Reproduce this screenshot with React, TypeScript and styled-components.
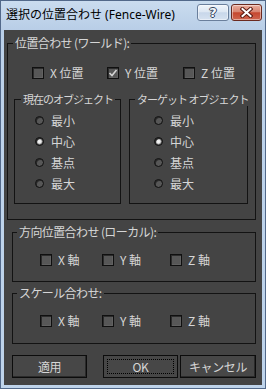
import React from "react";
import styled, { createGlobalStyle } from "styled-components";

const GlobalStyle = createGlobalStyle`
  html, body { margin: 0; padding: 0; background: #bcd2ea; }
  body { width: 266px; height: 389px; overflow: hidden; }
  * { box-sizing: border-box; }
`;

const Window = styled.div`
  width: 266px;
  height: 389px;
  display: flex;
  flex-direction: column;
  background: linear-gradient(#cadcef, #b9cee7 28px, #bdd2ea 60px, #bfd4eb);
  border: 1px solid #52698a;
  padding: 0 3px 3px 3px;
`;

const TitleBar = styled.div`
  height: 29px;
  flex: none;
  display: flex;
  align-items: flex-start;
`;

const Title = styled.div`
  flex: 1;
  padding: 6px 0 0 2px;
  font: 12px/16px "Noto Sans", "Noto Sans CJK JP", sans-serif;
  color: #000;
  white-space: nowrap;
`;

const CapButton = styled.div<{ $close?: boolean }>`
  width: ${(p) => (p.$close ? 31 : 32)}px;
  height: 17px;
  margin-top: 3px;
  margin-left: ${(p) => (p.$close ? 2 : 0)}px;
  border: 1px solid ${(p) => (p.$close ? "#6b2a20" : "#6a7f9c")};
  border-radius: 3px;
  background: ${(p) =>
    p.$close
      ? "linear-gradient(#eaae9f, #d88571 45%, #c5472f 52%, #cf6650)"
      : "linear-gradient(#f0f5fb, #dde7f3 45%, #c8d7ea 52%, #d6e2f0)"};
  box-shadow: inset 0 0 0 1px rgba(255, 255, 255, 0.45);
  display: flex;
  align-items: center;
  justify-content: center;
`;

const HelpGlyph = styled.span`
  font: bold 13px/13px "DejaVu Sans", sans-serif;
  color: #f6f8fc;
  text-shadow: 1px 0 0 #33445c, -1px 0 0 #33445c, 0 1px 0 #33445c, 0 -1px 0 #33445c;
`;

const Client = styled.div`
  flex: 1;
  background: #444444;
  display: flex;
  flex-direction: column;
  font-family: "Noto Sans CJK JP", "Noto Sans", sans-serif;
  font-size: 12px;
  line-height: 14px;
  color: #d6d6d6;
`;

const Group = styled.fieldset<{ $mt: number; $ml: number; $pb: number }>`
  margin: ${(p) => p.$mt}px 6px 0 ${(p) => p.$ml}px;
  padding: 0 0 ${(p) => p.$pb}px 0;
  border: 1px solid #131313;
  min-width: 0;
`;

const InnerGroup = styled.fieldset<{ $w: number }>`
  margin: 0;
  width: ${(p) => p.$w}px;
  min-width: 0;
  padding: 4px 0 9px 0;
  border: 1px solid #131313;
`;

const RadioList = styled.div<{ $pl: number }>`
  padding-left: ${(p) => p.$pl}px;
  display: flex;
  flex-direction: column;
`;

const Legend = styled.legend<{ $off: number; $small?: boolean }>`
  margin-left: ${(p) => p.$off}px;
  padding: 0 2px;
  font-size: ${(p) => (p.$small ? 11 : 12)}px;
  line-height: 14px;
  letter-spacing: ${(p) => (p.$small ? -1 : -0.6)}px;
  color: #d6d6d6;
  white-space: nowrap;
`;

const CheckRow = styled.div<{ $mt: number; $pl: number; $cols: string }>`
  margin-top: ${(p) => p.$mt}px;
  padding-left: ${(p) => p.$pl}px;
  height: 14px;
  display: grid;
  grid-template-columns: ${(p) => p.$cols};
  align-items: center;
`;

const CheckItem = styled.label`
  display: flex;
  align-items: center;
  gap: 6px;
  white-space: nowrap;
`;

const Box = styled.span`
  width: 12px;
  height: 12px;
  flex: none;
  background: #575757;
  border: 1px solid #101010;
  box-shadow: inset 1px 1px 0 #2c2c2c, inset -1px -1px 0 #616161;
  display: flex;
  align-items: center;
  justify-content: center;
`;

const InnerRow = styled.div`
  margin: 12px 7px 0 6px;
  display: flex;
  gap: 8px;
`;

const RadioItem = styled.label`
  height: 21px;
  display: flex;
  align-items: center;
  gap: 7px;
  white-space: nowrap;
`;

const Radio = styled.span<{ $on?: boolean }>`
  width: 9px;
  height: 9px;
  flex: none;
  border-radius: 50%;
  border: 1px solid #0e0e0e;
  background: ${(p) =>
    p.$on
      ? "radial-gradient(circle at 50% 50%, #f4f4f4 0, #e8e8e8 1.8px, #8a8a8a 2.6px, #585858 3.2px)"
      : "#575757"};
  box-shadow: inset 1px 1px 0 #2a2a2a;
`;

const ButtonRow = styled.div`
  margin-top: 11px;
  padding-left: 8px;
  display: flex;
`;

const Button = styled.button<{ $w: number; $ml: number; $def?: boolean }>`
  position: relative;
  width: ${(p) => p.$w}px;
  height: 23px;
  margin-left: ${(p) => p.$ml}px;
  padding: 0;
  background: #474747;
  border: 1px solid #0c0c0c;
  box-shadow: ${(p) => (p.$def ? "none" : "inset -1px -1px 0 #2a2a2a")};
  outline: none;
  font-family: "Noto Sans CJK JP", "Noto Sans", sans-serif;
  font-size: 12px;
  line-height: 14px;
  letter-spacing: -0.4px;
  color: #d6d6d6;
  &::after {
    content: "";
    display: ${(p) => (p.$def ? "block" : "none")};
    position: absolute;
    inset: 3px;
    border: 1px dotted #000;
  }
`;

const Check = () => (
  <svg width="10" height="10" viewBox="0 0 10 10">
    <path d="M1.5 5 L4 7.5 L8.5 2" fill="none" stroke="#d4d4d4" strokeWidth="1.6" />
  </svg>
);

const CloseX = () => (
  <svg width="13" height="11" viewBox="0 0 13 11">
    <path d="M2.5 2 L10.5 9 M10.5 2 L2.5 9" stroke="#5a1a12" strokeWidth="4" strokeLinecap="square" />
    <path d="M2.5 2 L10.5 9 M10.5 2 L2.5 9" stroke="#ffffff" strokeWidth="2" strokeLinecap="square" />
  </svg>
);

const CheckBox = ({ label, checked }: { label: string; checked?: boolean }) => (
  <CheckItem>
    <Box>{checked && <Check />}</Box>
    {label}
  </CheckItem>
);

const RadioOpt = ({ label, on }: { label: string; on?: boolean }) => (
  <RadioItem>
    <Radio $on={on} />
    {label}
  </RadioItem>
);

const options = ["最小", "中心", "基点", "最大"];

export default function App() {
  return (
    <>
      <GlobalStyle />
      <Window>
        <TitleBar>
          <Title>選択の位置合わせ (Fence-Wire)</Title>
          <CapButton>
            <HelpGlyph>?</HelpGlyph>
          </CapButton>
          <CapButton $close>
            <CloseX />
          </CapButton>
        </TitleBar>
        <Client>
          <Group $mt={6} $ml={3} $pb={15}>
            <Legend $off={5}>位置合わせ (ワールド):</Legend>
            <CheckRow $mt={16} $pl={24} $cols="75px 76px 1fr">
              <CheckBox label="X 位置" />
              <CheckBox label="Y 位置" checked />
              <CheckBox label="Z 位置" />
            </CheckRow>
            <InnerRow>
              <InnerGroup $w={107}>
                <Legend $off={6} $small>現在のオブジェクト</Legend>
                <RadioList $pl={20}>
                  {options.map((o) => (
                    <RadioOpt key={o} label={o} on={o === "中心"} />
                  ))}
                </RadioList>
              </InnerGroup>
              <InnerGroup $w={119}>
                <Legend $off={5} $small>ターゲット オブジェクト</Legend>
                <RadioList $pl={24}>
                  {options.map((o) => (
                    <RadioOpt key={o} label={o} on={o === "中心"} />
                  ))}
                </RadioList>
              </InnerGroup>
            </InnerRow>
          </Group>
          <Group $mt={5} $ml={8} $pb={14}>
            <Legend $off={4}>方向位置合わせ (ローカル):</Legend>
            <CheckRow $mt={14} $pl={27} $cols="62px 68px 1fr">
              <CheckBox label="X 軸" />
              <CheckBox label="Y 軸" />
              <CheckBox label="Z 軸" />
            </CheckRow>
          </Group>
          <Group $mt={4} $ml={8} $pb={15}>
            <Legend $off={4}>スケール合わせ:</Legend>
            <CheckRow $mt={14} $pl={27} $cols="62px 68px 1fr">
              <CheckBox label="X 軸" />
              <CheckBox label="Y 軸" />
              <CheckBox label="Z 軸" />
            </CheckRow>
          </Group>
          <ButtonRow>
            <Button $w={75} $ml={0}>適用</Button>
            <Button $w={75} $ml={16} $def>OK</Button>
            <Button $w={76} $ml={2}>キャンセル</Button>
          </ButtonRow>
        </Client>
      </Window>
    </>
  );
}
